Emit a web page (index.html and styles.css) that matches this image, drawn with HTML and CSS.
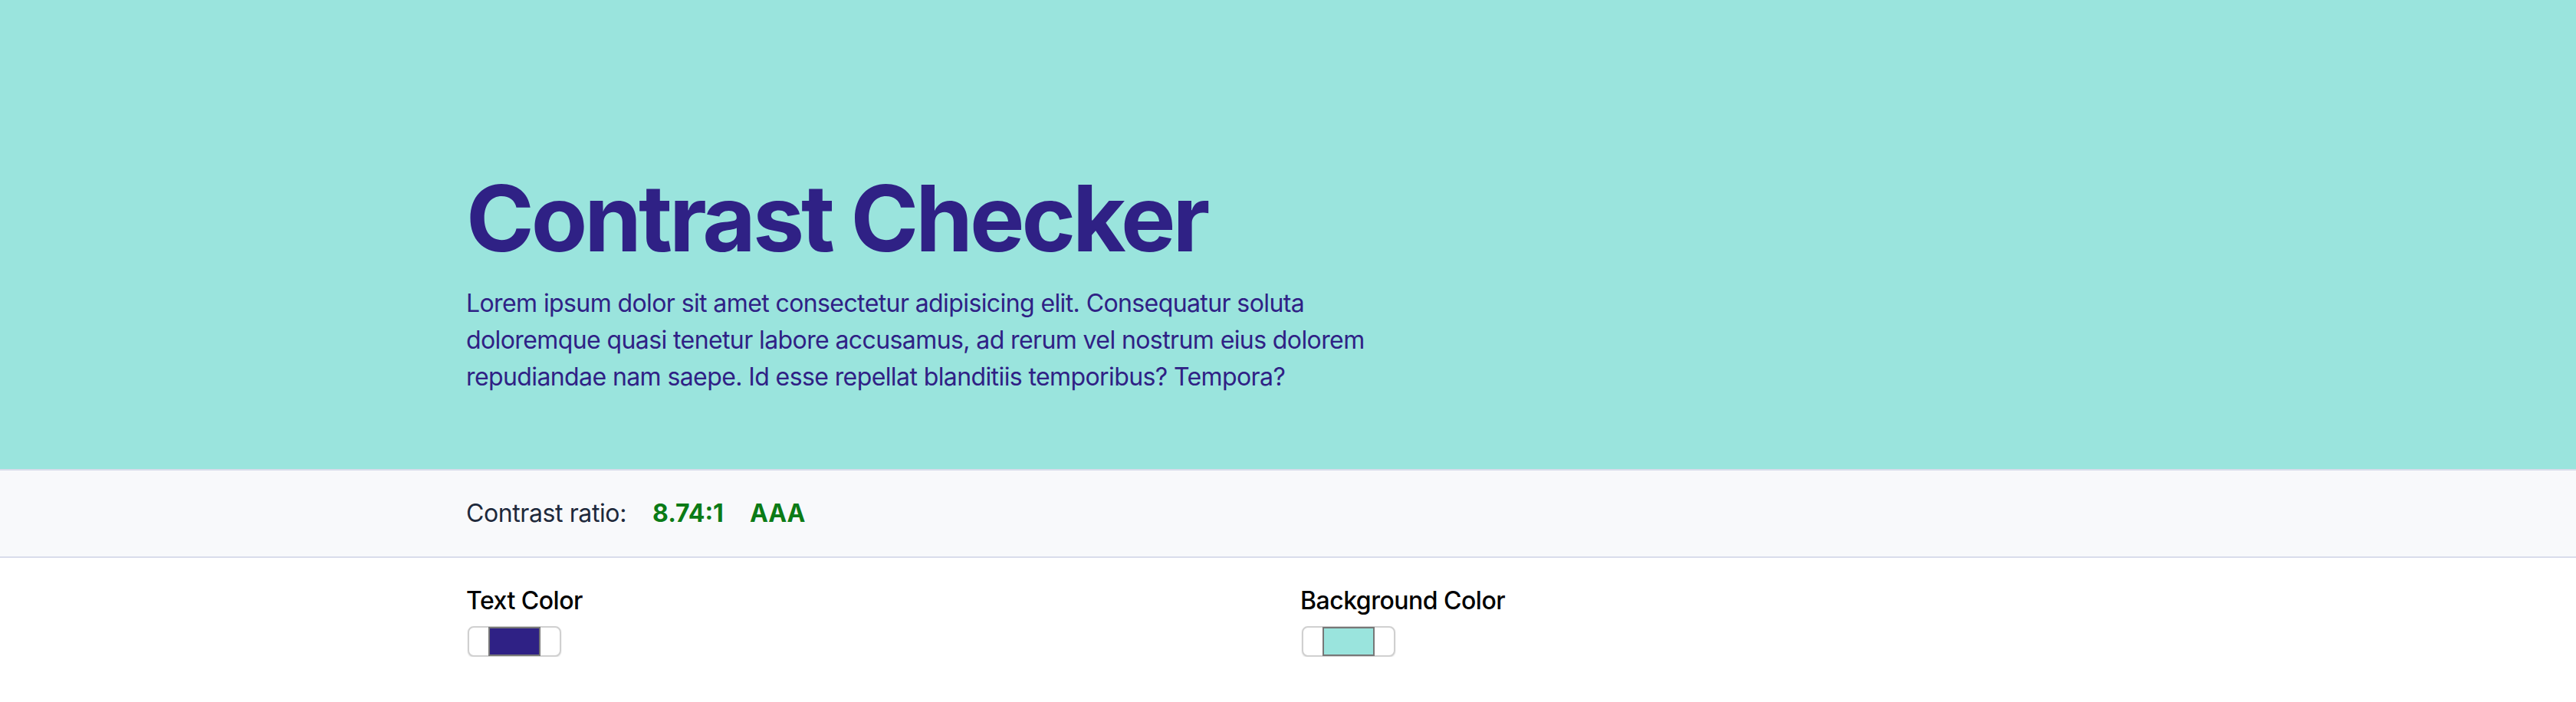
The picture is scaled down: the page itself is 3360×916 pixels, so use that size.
FILE: index.html
```html
<!DOCTYPE html>
<html lang="en">
<head>
<meta charset="utf-8">
<title>Contrast Checker</title>
<link rel="stylesheet" href="styles.css">
</head>
<body>
  <header class="hero">
    <div class="container">
      <h1 class="title">Contrast Checker</h1>
      <p class="lead">Lorem ipsum dolor sit amet consectetur adipisicing elit. Consequatur soluta doloremque quasi tenetur labore accusamus, ad rerum vel nostrum eius dolorem repudiandae nam saepe. Id esse repellat blanditiis temporibus? Tempora?</p>
    </div>
  </header>
  <section class="ratio-bar">
    <div class="container ratio-row">
      <span class="ratio-label">Contrast ratio:</span>
      <span class="ratio-value">8.74:1</span>
      <span class="ratio-grade">AAA</span>
    </div>
  </section>
  <main class="container pickers">
    <div class="picker">
      <div class="picker-label">Text Color</div>
      <div class="swatch"><span class="swatch-color swatch-text"></span></div>
    </div>
    <div class="picker">
      <div class="picker-label">Background Color</div>
      <div class="swatch"><span class="swatch-color swatch-bg"></span></div>
    </div>
  </main>
</body>
</html>
```

FILE: styles.css
```css
* { box-sizing: border-box; }
html, body { margin: 0; padding: 0; }
body {
  font-family: Inter, "Noto Sans", "Liberation Sans", sans-serif;
  background: #ffffff;
  color: #000;
}
.container {
  max-width: 2240px;
  margin: 0 auto;
  padding: 0 48px;
  width: 100%;
}
.hero {
  background: #9ae4dd;
  color: #2f2185;
  padding: 225px 0 96px;
}
.title {
  margin: 0;
  font-size: 120px;
  line-height: 120px;
  font-weight: 700;
  letter-spacing: -4px;
}
.lead {
  margin: 27px 0 0;
  max-width: 1195px;
  font-size: 32px;
  line-height: 48px;
  letter-spacing: -0.6px;
}
.ratio-bar {
  background: #f8f9fb;
  border-top: 2px solid #d9dceb;
  border-bottom: 2px solid #d9dceb;
  padding: 32px 0;
}
.ratio-row {
  display: flex;
  align-items: baseline;
  gap: 34px;
  font-size: 32px;
  line-height: 48px;
}
.ratio-label { color: #1e293b; letter-spacing: -0.4px; }
.ratio-value, .ratio-grade {
  color: #0b7b16;
  font-weight: 700;
}
.pickers {
  display: grid;
  grid-template-columns: 1fr 1fr;
  column-gap: 32px;
  padding-top: 32px;
}
.picker-label {
  font-size: 32px;
  line-height: 48px;
  font-weight: 500;
  color: #000;
  letter-spacing: -0.5px;
}
.swatch {
  margin-top: 9px;
  margin-left: 2px;
  width: 122px;
  height: 40px;
  border: 2px solid #d0d0d0;
  border-radius: 8px;
  background: #fff;
  box-shadow: 0 1px 2px rgba(0, 0, 0, 0.12);
  display: flex;
  justify-content: center;
  align-items: center;
}
.swatch-color {
  display: block;
  width: 68px;
  height: 38px;
  border: 2px solid #777777;
}
.swatch-text { background: #2f2185; }
.swatch-bg { background: #9ae4dd; }
```
